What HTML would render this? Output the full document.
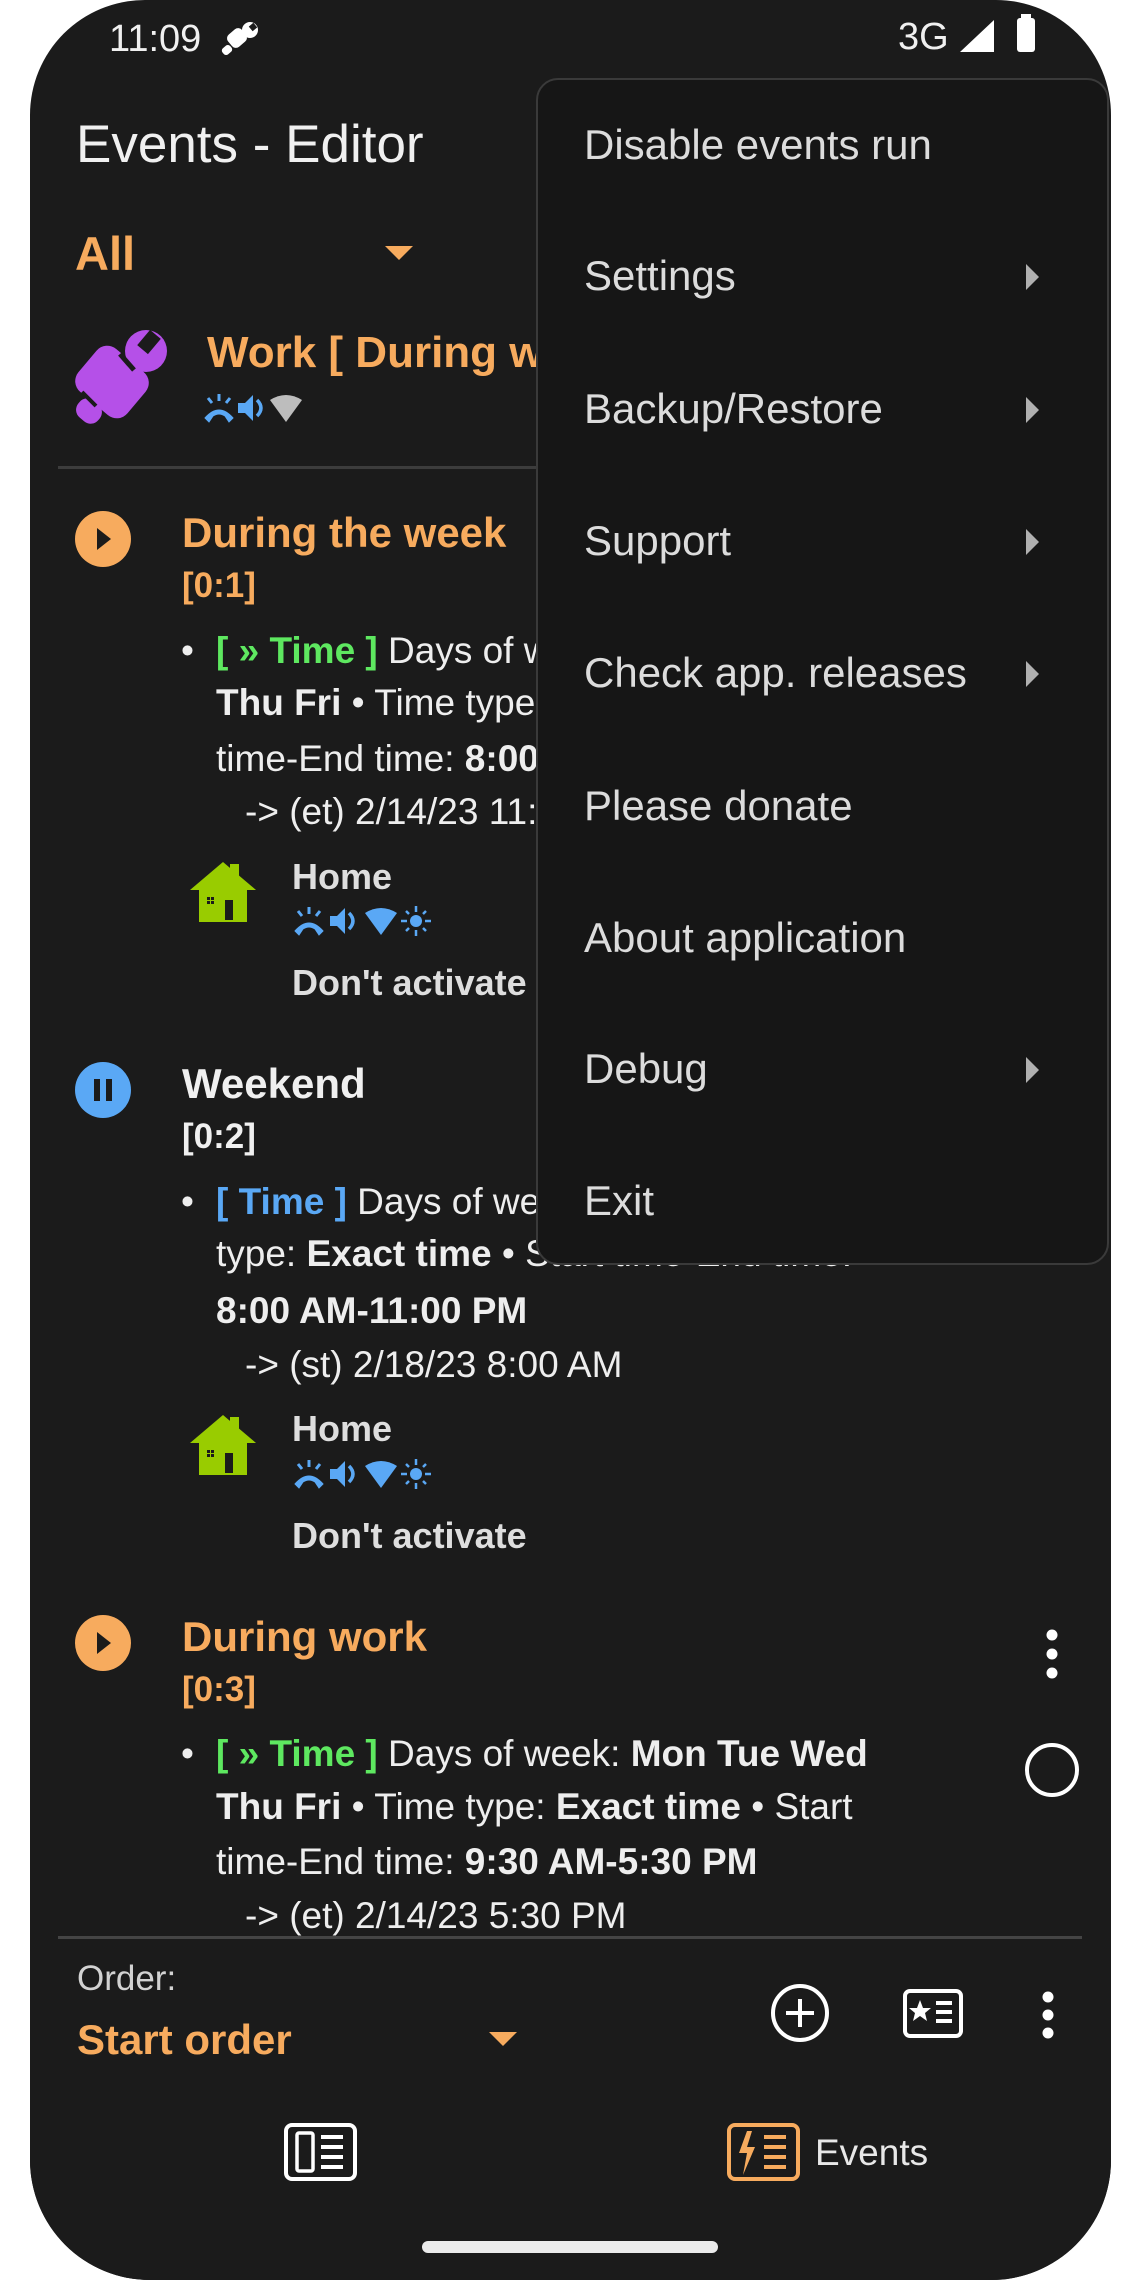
<!DOCTYPE html>
<html><head><meta charset="utf-8">
<style>
*{margin:0;padding:0;box-sizing:border-box}
html,body{width:1140px;height:2280px;overflow:hidden;background:#fff;font-family:"Liberation Sans",sans-serif}
#phone{position:absolute;left:30px;top:0;width:1081px;height:2280px;background:#1b1b1b;border-radius:115px 115px 120px 120px;overflow:hidden}
.t{position:absolute;white-space:nowrap;line-height:1}
.o{color:#f7ab5e}
.w{color:#f0f0f0}
.g{color:#5ee860}
.bl{color:#5aa8f5}
.b{font-weight:bold}
.body{font-size:37px;color:#eeeeee}
#menu{position:absolute;left:536px;top:78px;width:573px;height:1187px;background:#161616;border:2px solid #3a3a3a;border-radius:22px}
.mi{position:absolute;left:46px;font-size:42px;color:#dcdcdc;line-height:1;white-space:nowrap}
.arr{position:absolute;left:488px;width:0;height:0;border-top:13px solid transparent;border-bottom:13px solid transparent;border-left:13px solid #b0b0b0}
</style></head><body>
<div id="phone"></div>

<!-- status bar -->
<div class="t w" style="left:109px;top:20px;font-size:38px">11:09</div>
<svg style="position:absolute;left:220px;top:20px" width="42" height="40" viewBox="0 0 42 40"><g fill="#fff"><rect x="8" y="10" width="18" height="16" rx="5" transform="rotate(-40 17 18)"/><circle cx="30" cy="10" r="8"/><rect x="2" y="26" width="10" height="8" rx="3" transform="rotate(-40 7 30)"/></g><rect x="30" y="4" width="6" height="6" fill="#1b1b1b" transform="rotate(-40 33 7)"/></svg>
<div class="t w" style="left:898px;top:18px;font-size:38px">3G</div>
<svg style="position:absolute;left:958px;top:18px" width="40" height="36"><polygon points="2,34 36,34 36,2" fill="#fff"/></svg>
<svg style="position:absolute;left:1014px;top:14px" width="26" height="40"><rect x="7" y="0" width="10" height="5" fill="#fff"/><rect x="3" y="4" width="18" height="34" rx="3" fill="#fff"/></svg>

<!-- title -->
<div class="t w" style="left:76px;top:118px;font-size:53px">Events - Editor</div>
<div class="t o b" style="left:75px;top:230px;font-size:47px">All</div>
<svg style="position:absolute;left:385px;top:246px" width="28" height="15"><polygon points="0,0 28,0 14,14" fill="#f7ab5e"/></svg>

<!-- work profile -->
<svg style="position:absolute;left:60px;top:320px" width="130" height="120" viewBox="0 0 130 120"><g fill="#b550e8">
<rect x="20" y="34" width="64" height="56" rx="14" transform="rotate(40 52 62)"/>
<rect x="16" y="80" width="26" height="22" rx="10" transform="rotate(40 29 91)"/>
<circle cx="86" cy="31" r="21"/></g>
<rect x="82" y="12" width="14" height="20" fill="#1b1b1b" transform="rotate(40 89 22)"/>
<path d="M60 34 L74 50" stroke="#1b1b1b" stroke-width="5"/>
<path d="M36 86 L22 72" stroke="#1b1b1b" stroke-width="4"/>
</svg>
<div class="t o b" style="left:207px;top:331px;font-size:44px">Work [ During work ]</div>
<svg style="position:absolute;left:203px;top:392px" width="130" height="32" viewBox="0 0 130 32">
<g fill="#5aa8f5" stroke="#5aa8f5">
<path d="M2 26 Q16 10 30 26 L26 30 L22 24 Q16 20 10 24 L6 30 Z" stroke-width="1"/>
<line x1="16" y1="2" x2="16" y2="9" stroke-width="3"/><line x1="5" y1="6" x2="9" y2="11" stroke-width="3"/><line x1="27" y1="6" x2="23" y2="11" stroke-width="3"/>
<polygon points="35,11 42,11 50,3 50,29 42,21 35,21" stroke-width="0"/>
<path d="M54 8 Q62 16 54 24" fill="none" stroke-width="3.5"/>
</g>
<path d="M67 8 Q83 -2 99 8 L83 30 Z" fill="#bdbdbd"/>
</svg>
<div style="position:absolute;left:58px;top:466px;width:500px;height:3px;background:#3c3c3c"></div>

<!-- event 1 -->
<svg style="position:absolute;left:75px;top:511px" width="56" height="56"><circle cx="28" cy="28" r="28" fill="#f7ab5e"/><polygon points="22,17 22,39 36,28" fill="#1b1b1b"/></svg>
<div class="t o b" style="left:182px;top:512px;font-size:42px">During the week</div>
<div class="t o b" style="left:182px;top:568px;font-size:35px">[0:1]</div>
<div class="t body" style="left:181px;top:632px">•</div>
<div class="t body" style="left:216px;top:632px"><span class="g b">[ » Time ]</span> Days of week: <b>Mon Tue Wed</b></div>
<div class="t body" style="left:216px;top:684px"><b>Thu Fri</b> • Time type: <b>Exact time</b> • Start</div>
<div class="t body" style="left:216px;top:740px">time-End time: <b>8:00 AM-11:00 PM</b></div>
<div class="t body" style="left:245px;top:793px">-&gt; (et) 2/14/23 11:00 PM</div>
<svg style="position:absolute;left:190px;top:862px" width="66" height="62" viewBox="0 0 66 62"><polygon points="0,28 33,0 66,28" fill="#99cc00"/><rect x="40" y="2" width="9" height="18" fill="#99cc00"/><rect x="9" y="26" width="48" height="34" fill="#99cc00"/><rect x="35" y="38" width="8" height="20" fill="#1b1b1b"/><g fill="#1b1b1b"><rect x="17" y="35" width="3" height="3"/><rect x="21" y="35" width="3" height="3"/><rect x="17" y="39" width="3" height="3"/><rect x="21" y="39" width="3" height="3"/></g></svg>
<div class="t b" style="left:292px;top:859px;font-size:36px;color:#dedede">Home</div>
<svg style="position:absolute;left:293px;top:905px" width="145" height="32" viewBox="0 0 145 32">
<g fill="#5aa8f5" stroke="#5aa8f5">
<path d="M2 26 Q16 10 30 26 L26 30 L22 24 Q16 20 10 24 L6 30 Z" stroke-width="1"/>
<line x1="16" y1="2" x2="16" y2="9" stroke-width="3"/><line x1="5" y1="6" x2="9" y2="11" stroke-width="3"/><line x1="27" y1="6" x2="23" y2="11" stroke-width="3"/>
<polygon points="37,11 44,11 52,3 52,29 44,21 37,21" stroke-width="0"/>
<path d="M56 8 Q64 16 56 24" fill="none" stroke-width="3.5"/>
<path d="M72 8 Q88 -2 104 8 L88 30 Z" stroke-width="0"/>
<circle cx="123" cy="16" r="6" stroke-width="0"/>
<g stroke-width="2.5"><line x1="123" y1="1" x2="123" y2="7"/><line x1="123" y1="25" x2="123" y2="31"/><line x1="108" y1="16" x2="114" y2="16"/><line x1="132" y1="16" x2="138" y2="16"/><line x1="113" y1="6" x2="116" y2="9"/><line x1="130" y1="23" x2="133" y2="26"/><line x1="113" y1="26" x2="116" y2="23"/><line x1="130" y1="9" x2="133" y2="6"/></g>
</g></svg>
<div class="t b" style="left:292px;top:965px;font-size:36px;color:#dedede">Don't activate</div>

<!-- event 2 -->
<svg style="position:absolute;left:75px;top:1062px" width="56" height="56"><circle cx="28" cy="28" r="28" fill="#5aa8f5"/><rect x="19" y="17" width="6" height="22" fill="#1b1b1b"/><rect x="31" y="17" width="6" height="22" fill="#1b1b1b"/></svg>
<div class="t w b" style="left:182px;top:1063px;font-size:42px">Weekend</div>
<div class="t w b" style="left:182px;top:1119px;font-size:35px">[0:2]</div>
<div class="t body" style="left:181px;top:1183px">•</div>
<div class="t body" style="left:216px;top:1183px"><span class="bl b">[ Time ]</span> Days of week: <b>Sat Sun</b> • Time</div>
<div class="t body" style="left:216px;top:1235px">type: <b>Exact time</b> • Start time-End time:</div>
<div class="t body b" style="left:216px;top:1292px">8:00 AM-11:00 PM</div>
<div class="t body" style="left:245px;top:1346px">-&gt; (st) 2/18/23 8:00 AM</div>
<svg style="position:absolute;left:190px;top:1415px" width="66" height="62" viewBox="0 0 66 62"><polygon points="0,28 33,0 66,28" fill="#99cc00"/><rect x="40" y="2" width="9" height="18" fill="#99cc00"/><rect x="9" y="26" width="48" height="34" fill="#99cc00"/><rect x="35" y="38" width="8" height="20" fill="#1b1b1b"/><g fill="#1b1b1b"><rect x="17" y="35" width="3" height="3"/><rect x="21" y="35" width="3" height="3"/><rect x="17" y="39" width="3" height="3"/><rect x="21" y="39" width="3" height="3"/></g></svg>
<div class="t b" style="left:292px;top:1411px;font-size:36px;color:#dedede">Home</div>
<svg style="position:absolute;left:293px;top:1458px" width="145" height="32" viewBox="0 0 145 32">
<g fill="#5aa8f5" stroke="#5aa8f5">
<path d="M2 26 Q16 10 30 26 L26 30 L22 24 Q16 20 10 24 L6 30 Z" stroke-width="1"/>
<line x1="16" y1="2" x2="16" y2="9" stroke-width="3"/><line x1="5" y1="6" x2="9" y2="11" stroke-width="3"/><line x1="27" y1="6" x2="23" y2="11" stroke-width="3"/>
<polygon points="37,11 44,11 52,3 52,29 44,21 37,21" stroke-width="0"/>
<path d="M56 8 Q64 16 56 24" fill="none" stroke-width="3.5"/>
<path d="M72 8 Q88 -2 104 8 L88 30 Z" stroke-width="0"/>
<circle cx="123" cy="16" r="6" stroke-width="0"/>
<g stroke-width="2.5"><line x1="123" y1="1" x2="123" y2="7"/><line x1="123" y1="25" x2="123" y2="31"/><line x1="108" y1="16" x2="114" y2="16"/><line x1="132" y1="16" x2="138" y2="16"/><line x1="113" y1="6" x2="116" y2="9"/><line x1="130" y1="23" x2="133" y2="26"/><line x1="113" y1="26" x2="116" y2="23"/><line x1="130" y1="9" x2="133" y2="6"/></g>
</g></svg>
<div class="t b" style="left:292px;top:1518px;font-size:36px;color:#dedede">Don't activate</div>

<!-- event 3 -->
<svg style="position:absolute;left:75px;top:1615px" width="56" height="56"><circle cx="28" cy="28" r="28" fill="#f7ab5e"/><polygon points="22,17 22,39 36,28" fill="#1b1b1b"/></svg>
<div class="t o b" style="left:182px;top:1616px;font-size:42px">During work</div>
<div class="t o b" style="left:182px;top:1672px;font-size:35px">[0:3]</div>
<svg style="position:absolute;left:1045px;top:1628px" width="14" height="52"><circle cx="7" cy="7" r="5.5" fill="#fff"/><circle cx="7" cy="26" r="5.5" fill="#fff"/><circle cx="7" cy="45" r="5.5" fill="#fff"/></svg>
<svg style="position:absolute;left:1022px;top:1740px" width="60" height="60"><circle cx="30" cy="30" r="25" fill="none" stroke="#fff" stroke-width="4"/></svg>
<div class="t body" style="left:181px;top:1735px">•</div>
<div class="t body" style="left:216px;top:1735px"><span class="g b">[ » Time ]</span> Days of week: <b>Mon Tue Wed</b></div>
<div class="t body" style="left:216px;top:1788px"><b>Thu Fri</b> • Time type: <b>Exact time</b> • Start</div>
<div class="t body" style="left:216px;top:1843px">time-End time: <b>9:30 AM-5:30 PM</b></div>
<div class="t body" style="left:245px;top:1897px">-&gt; (et) 2/14/23 5:30 PM</div>

<!-- bottom area -->
<div style="position:absolute;left:30px;top:1938px;width:1081px;height:342px;background:#1b1b1b;border-radius:0 0 120px 120px"></div>
<div style="position:absolute;left:58px;top:1936px;width:1024px;height:3px;background:#444"></div>
<div class="t" style="left:77px;top:1961px;font-size:35px;color:#d2d2d2">Order:</div>
<div class="t o b" style="left:77px;top:2019px;font-size:42px">Start order</div>
<svg style="position:absolute;left:489px;top:2032px" width="28" height="14"><polygon points="0,0 28,0 14,14" fill="#f7ab5e"/></svg>
<svg style="position:absolute;left:770px;top:1983px" width="60" height="60"><circle cx="30" cy="30" r="27" fill="none" stroke="#fff" stroke-width="4"/><rect x="28" y="16" width="4" height="28" fill="#fff"/><rect x="16" y="28" width="28" height="4" fill="#fff"/></svg>
<svg style="position:absolute;left:903px;top:1989px" width="60" height="50"><rect x="2" y="2" width="56" height="45" rx="5" fill="none" stroke="#fff" stroke-width="4"/><polygon points="17,11 20,19 28,19 22,24 24,32 17,27 10,32 12,24 6,19 14,19" fill="#fff"/><rect x="33" y="12" width="16" height="4" fill="#fff"/><rect x="33" y="21" width="16" height="4" fill="#fff"/><rect x="33" y="30" width="16" height="4" fill="#fff"/></svg>
<svg style="position:absolute;left:1041px;top:1990px" width="14" height="50"><circle cx="7" cy="7" r="5.5" fill="#fff"/><circle cx="7" cy="25" r="5.5" fill="#fff"/><circle cx="7" cy="43" r="5.5" fill="#fff"/></svg>

<svg style="position:absolute;left:284px;top:2123px" width="73" height="58"><rect x="2" y="2" width="69" height="54" rx="6" fill="none" stroke="#fff" stroke-width="4"/><rect x="13" y="10" width="16" height="38" rx="2" fill="none" stroke="#fff" stroke-width="3.5"/><rect x="37" y="12" width="22" height="4" fill="#fff"/><rect x="37" y="22" width="22" height="4" fill="#fff"/><rect x="37" y="32" width="22" height="4" fill="#fff"/><rect x="37" y="42" width="22" height="4" fill="#fff"/></svg>
<svg style="position:absolute;left:727px;top:2123px" width="73" height="58"><rect x="2" y="2" width="69" height="54" rx="6" fill="none" stroke="#f7ab5e" stroke-width="4"/><polygon points="20,8 12,30 20,30 16,52 28,24 20,24 25,8" fill="#f7ab5e"/><rect x="37" y="12" width="22" height="4" fill="#f7ab5e"/><rect x="37" y="22" width="22" height="4" fill="#f7ab5e"/><rect x="37" y="32" width="22" height="4" fill="#f7ab5e"/><rect x="37" y="42" width="22" height="4" fill="#f7ab5e"/></svg>
<div class="t" style="left:815px;top:2134px;font-size:37px;color:#e8e8e8">Events</div>
<div style="position:absolute;left:422px;top:2241px;width:296px;height:12px;border-radius:6px;background:#ececec"></div>

<!-- popup menu -->
<div id="menu">
<div class="mi" style="top:44px">Disable events run</div>
<div class="mi" style="top:175px">Settings</div><div class="arr" style="top:184px"></div>
<div class="mi" style="top:308px">Backup/Restore</div><div class="arr" style="top:317px"></div>
<div class="mi" style="top:440px">Support</div><div class="arr" style="top:449px"></div>
<div class="mi" style="top:572px">Check app. releases</div><div class="arr" style="top:581px"></div>
<div class="mi" style="top:705px">Please donate</div>
<div class="mi" style="top:837px">About application</div>
<div class="mi" style="top:968px">Debug</div><div class="arr" style="top:977px"></div>
<div class="mi" style="top:1100px">Exit</div>
</div>
</body></html>
